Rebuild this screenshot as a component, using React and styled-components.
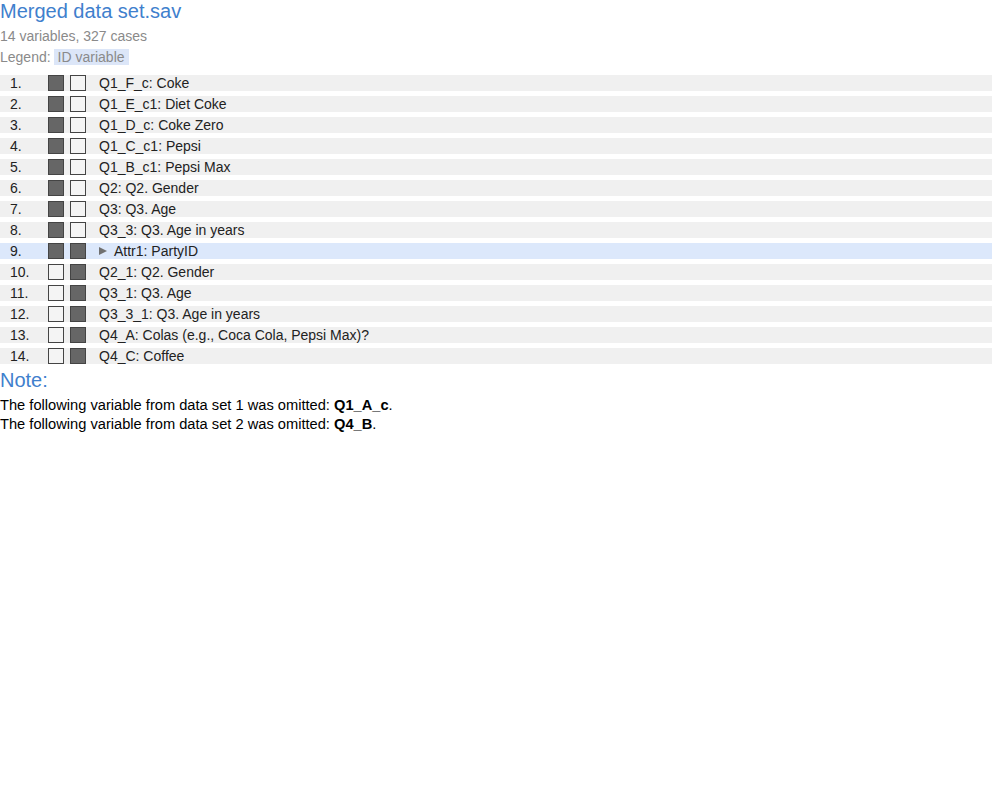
import React from 'react';
import styled, { createGlobalStyle } from 'styled-components';

const GlobalStyle = createGlobalStyle`
  body {
    margin: 0;
    font-family: "Liberation Sans", Arial, sans-serif;
    background: #fff;
  }
`;

const variables = [
  { name: 'Q1_F_c: Coke', a: true, b: false },
  { name: 'Q1_E_c1: Diet Coke', a: true, b: false },
  { name: 'Q1_D_c: Coke Zero', a: true, b: false },
  { name: 'Q1_C_c1: Pepsi', a: true, b: false },
  { name: 'Q1_B_c1: Pepsi Max', a: true, b: false },
  { name: 'Q2: Q2. Gender', a: true, b: false },
  { name: 'Q3: Q3. Age', a: true, b: false },
  { name: 'Q3_3: Q3. Age in years', a: true, b: false },
  { name: 'Attr1: PartyID', a: true, b: true, id: true },
  { name: 'Q2_1: Q2. Gender', a: false, b: true },
  { name: 'Q3_1: Q3. Age', a: false, b: true },
  { name: 'Q3_3_1: Q3. Age in years', a: false, b: true },
  { name: 'Q4_A: Colas (e.g., Coca Cola, Pepsi Max)?', a: false, b: true },
  { name: 'Q4_C: Coffee', a: false, b: true },
];

const App = () => {
  return (
    <Page>
      <GlobalStyle />
      <Title>Merged data set.sav</Title>
      <Summary>14 variables, 327 cases</Summary>
      <Legend>
        Legend: <LegendTag>ID variable</LegendTag>
      </Legend>
      <List>
        {variables.map((v, i) => (
          <Row key={v.name} highlight={v.id}>
            <Index>{i + 1}.</Index>
            <Box filled={v.a} />
            <Box filled={v.b} />
            <Label>
              {v.id && <Arrow />}
              {v.name}
            </Label>
          </Row>
        ))}
      </List>
      <NoteTitle>Note:</NoteTitle>
      <Notes>
        <NoteLine>
          The following variable from data set 1 was omitted: <b>Q1_A_c</b>.
        </NoteLine>
        <NoteLine>
          The following variable from data set 2 was omitted: <b>Q4_B</b>.
        </NoteLine>
      </Notes>
    </Page>
  );
};

export default App;

const Page = styled.div`
  display: flex;
  flex-direction: column;
`

const Title = styled.div`
  font-size: 20px;
  line-height: 23px;
  color: #3f80cd;
`

const Summary = styled.div`
  margin-top: 3px;
  font-size: 14px;
  line-height: 20px;
  color: #8a8a8a;
`

const Legend = styled.div`
  margin-top: 3px;
  font-size: 14px;
  line-height: 16px;
  color: #8a8a8a;
  display: flex;
  gap: 3px;
`

const LegendTag = styled.span`
  background: #dce6f8;
  padding: 0 4px;
  line-height: 16px;
`

const List = styled.div`
  margin-top: 10px;
  display: flex;
  flex-direction: column;
  gap: 5px;
`

const Row = styled.div`
  display: flex;
  align-items: center;
  height: 16px;
  background: ${({ highlight }) => (highlight ? '#dce8fb' : '#f0f0f0')};
  font-size: 14px;
  color: #222;
`

const Index = styled.span`
  width: 38px;
  padding-left: 10px;
`

const Box = styled.span`
  box-sizing: border-box;
  width: 16px;
  height: 16px;
  margin-right: 6px;
  border: 1px solid #444;
  background: ${({ filled }) => (filled ? '#666' : '#f4f4f4')};
`

const Label = styled.span`
  margin-left: 7px;
  display: flex;
  align-items: center;
  white-space: nowrap;
`

const Arrow = styled.span`
  width: 0;
  height: 0;
  border-top: 4.5px solid transparent;
  border-bottom: 4.5px solid transparent;
  border-left: 8px solid #707070;
  margin-left: 0;
  margin-right: 7px;
`

const NoteTitle = styled.div`
  margin-top: 5px;
  font-size: 20px;
  line-height: 22px;
  color: #3f80cd;
`

const Notes = styled.div`
  margin-top: 5px;
  display: flex;
  flex-direction: column;
`

const NoteLine = styled.div`
  font-size: 14.67px;
  line-height: 19px;
  color: #000;

  b {
    font-weight: bold;
  }
`
